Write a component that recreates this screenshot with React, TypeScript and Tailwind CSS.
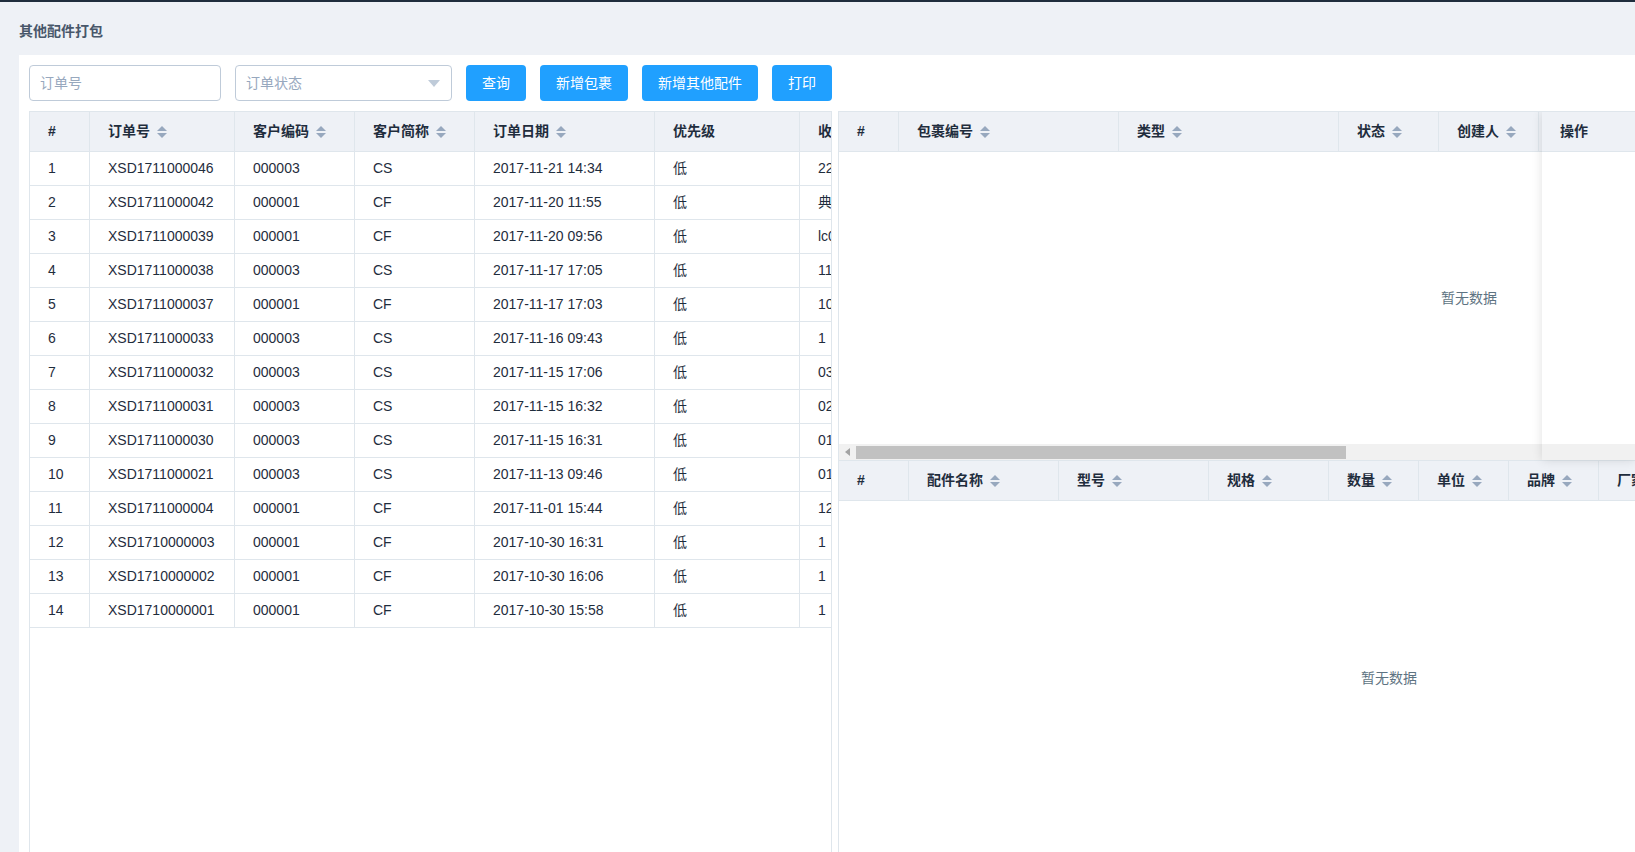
import React from "react"

// order list rows
const orders = [
  ["1", "XSD1711000046", "000003", "CS", "2017-11-21 14:34", "低", "2231"],
  ["2", "XSD1711000042", "000001", "CF", "2017-11-20 11:55", "低", "典典"],
  ["3", "XSD1711000039", "000001", "CF", "2017-11-20 09:56", "低", "lc01"],
  ["4", "XSD1711000038", "000003", "CS", "2017-11-17 17:05", "低", "1122"],
  ["5", "XSD1711000037", "000001", "CF", "2017-11-17 17:03", "低", "1011"],
  ["6", "XSD1711000033", "000003", "CS", "2017-11-16 09:43", "低", "1"],
  ["7", "XSD1711000032", "000003", "CS", "2017-11-15 17:06", "低", "0301"],
  ["8", "XSD1711000031", "000003", "CS", "2017-11-15 16:32", "低", "0201"],
  ["9", "XSD1711000030", "000003", "CS", "2017-11-15 16:31", "低", "0101"],
  ["10", "XSD1711000021", "000003", "CS", "2017-11-13 09:46", "低", "0101"],
  ["11", "XSD1711000004", "000001", "CF", "2017-11-01 15:44", "低", "1201"],
  ["12", "XSD1710000003", "000001", "CF", "2017-10-30 16:31", "低", "1"],
  ["13", "XSD1710000002", "000001", "CF", "2017-10-30 16:06", "低", "1"],
  ["14", "XSD1710000001", "000001", "CF", "2017-10-30 15:58", "低", "1"],
]

type Col = { label: string; w: string; sort?: boolean }

const orderCols: Col[] = [
  { label: "#", w: "w-[60px]" },
  { label: "订单号", w: "w-[145px]", sort: true },
  { label: "客户编码", w: "w-[120px]", sort: true },
  { label: "客户简称", w: "w-[120px]", sort: true },
  { label: "订单日期", w: "w-[180px]", sort: true },
  { label: "优先级", w: "w-[145px]" },
  { label: "收货地址", w: "w-[200px]" },
]

const packageCols: Col[] = [
  { label: "#", w: "w-[60px]" },
  { label: "包裹编号", w: "w-[220px]", sort: true },
  { label: "类型", w: "w-[220px]", sort: true },
  { label: "状态", w: "w-[100px]", sort: true },
  { label: "创建人", w: "w-[100px]", sort: true },
  { label: "创建时间", w: "w-[180px]", sort: true },
  { label: "备注", w: "w-[180px]" },
  { label: "操作", w: "w-[200px]" },
]

const partCols: Col[] = [
  { label: "#", w: "w-[70px]" },
  { label: "配件名称", w: "w-[150px]", sort: true },
  { label: "型号", w: "w-[150px]", sort: true },
  { label: "规格", w: "w-[120px]", sort: true },
  { label: "数量", w: "w-[90px]", sort: true },
  { label: "单位", w: "w-[90px]", sort: true },
  { label: "品牌", w: "w-[90px]", sort: true },
  { label: "厂家", w: "w-[250px]", sort: true },
  { label: "备注", w: "w-[100px]" },
]

function SortCaret() {
  return (
    <svg width="10" height="12" viewBox="0 0 10 12" className="ml-[7px] shrink-0">
      <polygon points="0,5 5,0 10,5" fill="#97a8be" />
      <polygon points="0,7 10,7 5,12" fill="#97a8be" />
    </svg>
  )
}

function HeaderRow({ cols }: { cols: Col[] }) {
  return (
    <div className="flex h-[40px] border-b border-[#dfe6ec] bg-[#eef1f6]">
      {cols.map((c) => (
        <div
          key={c.label}
          className={`${c.w} flex shrink-0 items-center border-r border-[#dfe6ec] px-[18px] font-bold whitespace-nowrap`}
        >
          {c.label}
          {c.sort && <SortCaret />}
        </div>
      ))}
    </div>
  )
}

function Button({ children, w }: { children: React.ReactNode; w: string }) {
  return (
    <button className={`${w} h-[36px] rounded-[4px] bg-[#20a0ff] text-[14px] text-white`}>
      {children}
    </button>
  )
}

function Scrollbar() {
  return (
    <div className="flex h-[16px] items-center bg-[#f1f1f1]">
      <div className="flex w-[17px] shrink-0 justify-center">
        <svg width="5" height="8" viewBox="0 0 5 8">
          <polygon points="5,0 5,8 0,4" fill="#a3a3a3" />
        </svg>
      </div>
      <div className="h-[13px] w-[490px] shrink-0 bg-[#c1c1c1]" />
      <div className="flex-1" />
      <div className="flex w-[10px] shrink-0 justify-center">
        <svg width="5" height="8" viewBox="0 0 5 8">
          <polygon points="0,0 0,8 5,4" fill="#505050" />
        </svg>
      </div>
    </div>
  )
}

export default function App() {
  return (
    <div className="flex h-[852px] w-full flex-col overflow-hidden border-t-2 border-[#1f2d3d] bg-[#eef1f6] font-['Liberation_Sans','Noto_Sans_CJK_SC',sans-serif] text-[14px] text-[#1f2d3d]">
      <div className="h-[53px] shrink-0 pl-[19px] pt-[19px] text-[14px] leading-[20px] font-bold text-[#48576a]">
        其他配件打包
      </div>

      <div className="ml-[19px] flex min-h-0 flex-1 flex-col bg-white pl-[10px] pt-[10px]">
        {/* toolbar */}
        <div className="flex h-[36px] shrink-0 items-center gap-[14px]">
          <input
            placeholder="订单号"
            className="h-[36px] w-[192px] rounded-[4px] border border-[#bfcbd9] px-[10px] text-[14px] outline-none placeholder:text-[#97a8be]"
          />
          <div className="flex h-[36px] w-[217px] items-center justify-between rounded-[4px] border border-[#bfcbd9] pl-[10px] pr-[11px] text-[#97a8be]">
            <span>订单状态</span>
            <svg width="12" height="7" viewBox="0 0 12 7">
              <polygon points="0,0 12,0 6,7" fill="#bfcbd9" />
            </svg>
          </div>
          <Button w="w-[60px]">查询</Button>
          <Button w="w-[88px]">新增包裹</Button>
          <Button w="w-[116px]">新增其他配件</Button>
          <Button w="w-[60px]">打印</Button>
        </div>

        <div className="mt-[10px] flex min-h-0 flex-1 gap-[6px]">
          {/* orders table */}
          <div className="w-[803px] shrink-0 overflow-hidden border-x border-t border-[#dfe6ec]">
            <div className="w-[970px]">
              <HeaderRow cols={orderCols} />
              {orders.map((r) => (
                <div key={r[0]} className="flex h-[34px] border-b border-[#dfe6ec]">
                  {r.map((v, i) => (
                    <div
                      key={i}
                      className={`${orderCols[i].w} flex shrink-0 items-center overflow-hidden border-r border-[#dfe6ec] px-[18px] whitespace-nowrap`}
                    >
                      {v}
                    </div>
                  ))}
                </div>
              ))}
            </div>
          </div>

          {/* packages + parts */}
          <div className="flex min-w-0 flex-1 flex-col overflow-hidden border-l border-t border-[#dfe6ec]">
            <div className="relative shrink-0">
              <div className="overflow-hidden">
                <div className="w-[1260px]">
                  <HeaderRow cols={packageCols} />
                  <div className="flex h-[292px] w-[1260px] items-center justify-center text-[#5e7382]">
                    暂无数据
                  </div>
                </div>
              </div>
              <Scrollbar />
              {/* fixed right column */}
              <div className="absolute right-0 top-0 h-[348px] w-[93px] bg-white shadow-[0_0_10px_rgba(0,0,0,0.12)]">
                <div className="flex h-[40px] items-center border-b border-[#dfe6ec] bg-[#eef1f6] px-[18px] font-bold">
                  操作
                </div>
                <div className="h-[292px] bg-white" />
                <div className="h-[16px] bg-[#f1f1f1]" />
              </div>
            </div>

            <div className="min-h-0 flex-1 overflow-hidden border-t border-[#dfe6ec]">
              <div className="w-[1100px]">
                <HeaderRow cols={partCols} />
                <div className="flex h-[354px] w-[1100px] items-center justify-center text-[#5e7382]">
                  暂无数据
                </div>
              </div>
            </div>
          </div>
        </div>
      </div>
    </div>
  )
}
